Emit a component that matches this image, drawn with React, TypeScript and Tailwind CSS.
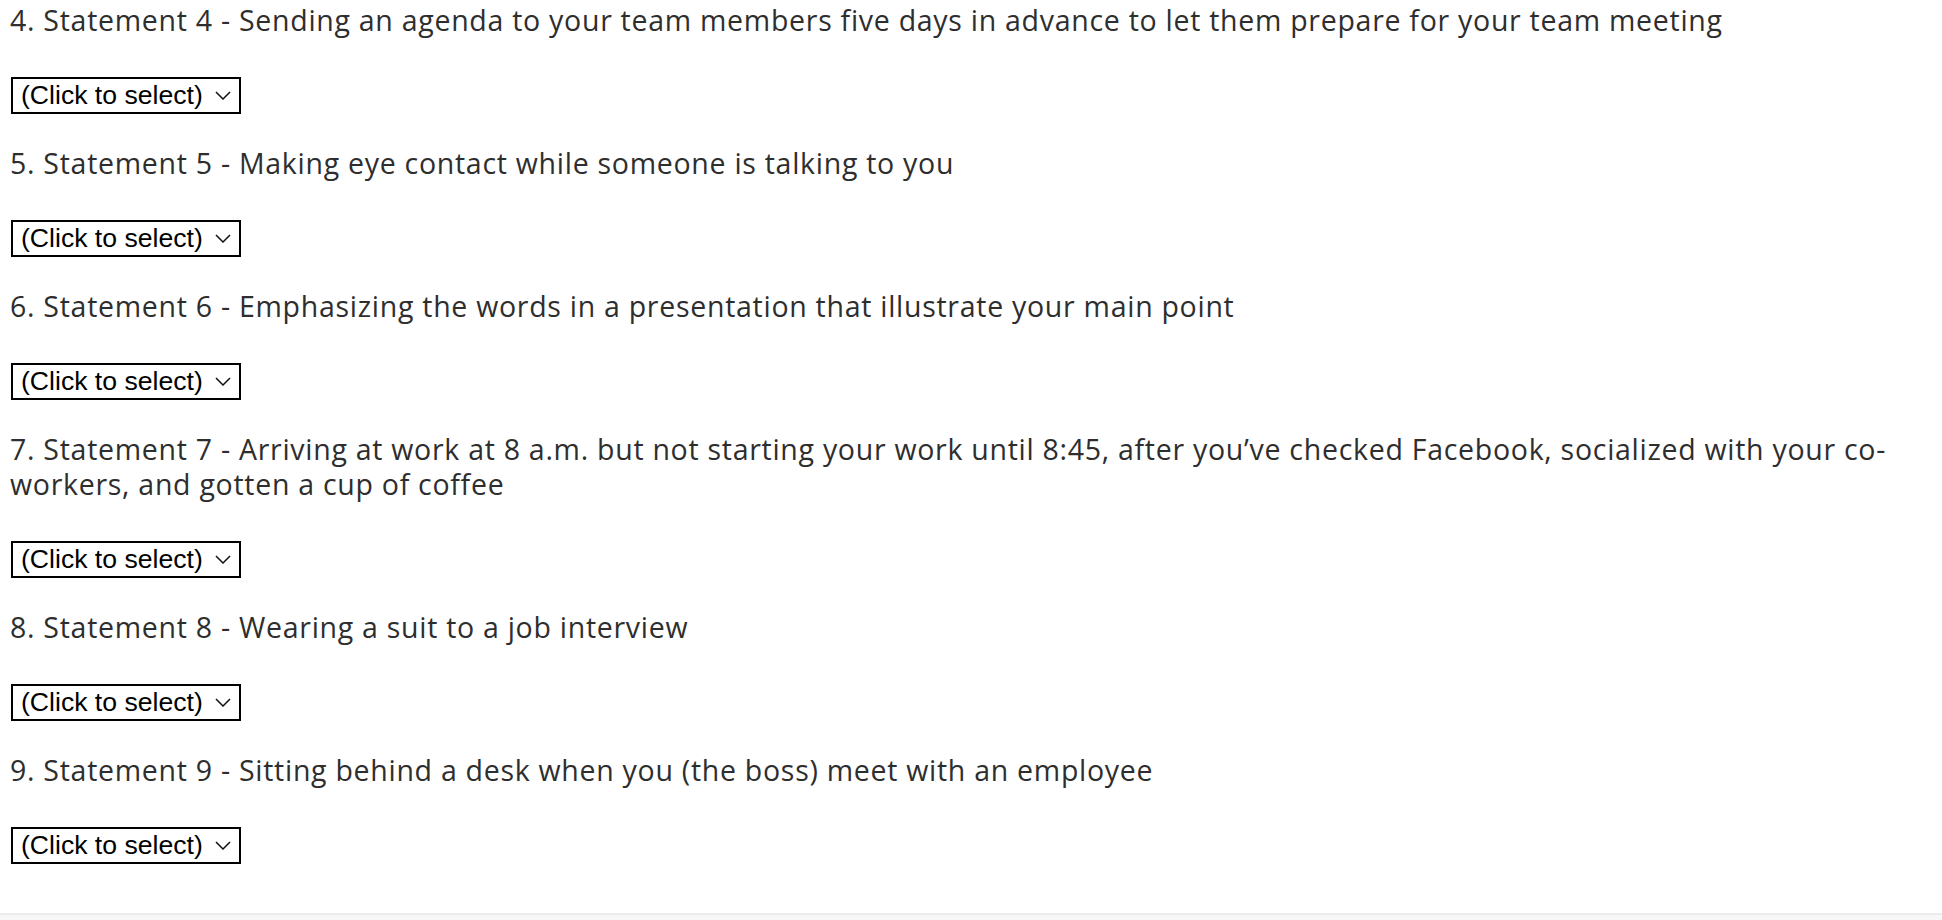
import { useState } from 'react'

const statements = [
  { n: 4, text: 'Sending an agenda to your team members five days in advance to let them prepare for your team meeting' },
  { n: 5, text: 'Making eye contact while someone is talking to you' },
  { n: 6, text: 'Emphasizing the words in a presentation that illustrate your main point' },
  { n: 7, text: 'Arriving at work at 8 a.m. but not starting your work until 8:45, after you\u2019ve checked Facebook, socialized with your co-workers, and gotten a cup of coffee' },
  { n: 8, text: 'Wearing a suit to a job interview' },
  { n: 9, text: 'Sitting behind a desk when you (the boss) meet with an employee' },
]

const options = ['(Click to select)', 'Verbal', 'Nonverbal', 'Not communication']

export default function App() {
  const [answers, setAnswers] = useState<Record<number, string>>({})

  return (
    <div className="min-h-[920px] bg-white flex flex-col">
      <div className="flex-1 pl-[10px] pr-[10px] pt-[3px] font-['Open_Sans','Liberation_Sans',sans-serif] text-[#2e2e2e]">
        {statements.map(s => (
          <div key={s.n} className="pb-[32px]">
            <p className="text-[28.5px] leading-[35px] tracking-[0.72px] mb-[39px]">
              {s.n}. Statement {s.n} - {s.text}
            </p>
            <SelectBox
              value={answers[s.n] ?? options[0]}
              onChange={v => setAnswers(a => ({ ...a, [s.n]: v }))}
            />
          </div>
        ))}
      </div>
      <div className="h-[7px] border-t-2 border-[#ececec] bg-[#f7f7f7]" />
    </div>
  )
}

function SelectBox({ value, onChange }: { value: string; onChange: (v: string) => void }) {
  return (
    <div className="relative flex w-fit ml-px">
      <select
        value={value}
        onChange={e => onChange(e.target.value)}
        className="appearance-none border-2 border-black bg-white text-black h-[37px] w-[230px] pl-[8px] pr-[30px] font-['Liberation_Sans',Arial,sans-serif] text-[26.6px] leading-[31px] rounded-none outline-none"
      >
        {options.map(o => (
          <option key={o} value={o}>{o}</option>
        ))}
      </select>
      <svg
        className="pointer-events-none absolute right-[10px] top-[14px]"
        width="16"
        height="9"
        viewBox="0 0 16 9"
        fill="none"
      >
        <path d="M1 1l7 7 7-7" stroke="#111" strokeWidth="1.5" />
      </svg>
    </div>
  )
}
